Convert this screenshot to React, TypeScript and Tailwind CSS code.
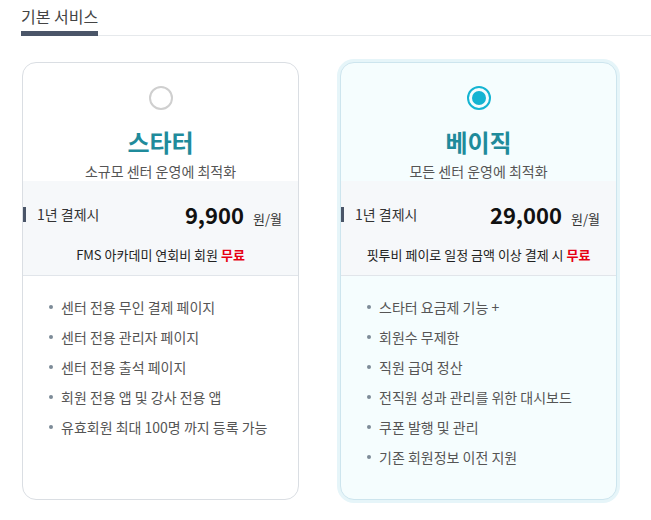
import React from 'react';

type Plan = {
  name: string;
  desc: string;
  price: string;
  note: string;
  features: string[];
  selected: boolean;
};

const plans: Plan[] = [
  {
    name: '스타터',
    desc: '소규모 센터 운영에 최적화',
    price: '9,900',
    note: 'FMS 아카데미 연회비 회원',
    features: [
      '센터 전용 무인 결제 페이지',
      '센터 전용 관리자 페이지',
      '센터 전용 출석 페이지',
      '회원 전용 앱 및 강사 전용 앱',
      '유효회원 최대 100명 까지 등록 가능',
    ],
    selected: false,
  },
  {
    name: '베이직',
    desc: '모든 센터 운영에 최적화',
    price: '29,000',
    note: '핏투비 페이로 일정 금액 이상 결제 시',
    features: [
      '스타터 요금제 기능 +',
      '회원수 무제한',
      '직원 급여 정산',
      '전직원 성과 관리를 위한 대시보드',
      '쿠폰 발행 및 관리',
      '기존 회원정보 이전 지원',
    ],
    selected: true,
  },
];

// Radio indicator at the top of each card
const Radio = ({ on }: { on: boolean }) =>
  on ? (
    <div className="w-[24px] h-[24px] rounded-full border-[2.5px] border-[#14b4d2] flex items-center justify-center">
      <div className="w-[14px] h-[14px] rounded-full bg-[#14b4d2]" />
    </div>
  ) : (
    <div className="w-[24px] h-[24px] rounded-full border-[2.5px] border-[#cfcfcf]" />
  );

const PlanCard = ({ plan }: { plan: Plan }) => (
  <div
    className={
      plan.selected
        ? 'w-[277px] rounded-[14px] border border-[#cde5ee] bg-[#f5fdfe] ring-[3px] ring-[#e6f5f9] overflow-hidden flex flex-col'
        : 'w-[277px] rounded-[14px] border border-[#dadee3] bg-white overflow-hidden flex flex-col'
    }
  >
    <div className="flex flex-col items-center pt-[23px]">
      <Radio on={plan.selected} />
      <div className="mt-[18px] text-[24px] leading-[28px] font-bold text-[#1f8b9b]">{plan.name}</div>
      <div className="mt-[6px] text-[14px] leading-[19px] text-[#555]">{plan.desc}</div>
    </div>

    {/* price band */}
    <div className="bg-[#f6f8fa] border-b border-[#e1e5ea] pt-[17px] pb-[10px]">
      <div className="flex items-center pr-[16px]">
        <div className="-ml-px w-[4px] h-[15px] bg-[#4a5568]" />
        <span className="ml-[11px] text-[14px] text-[#333]">1년 결제시</span>
        <div className="ml-auto flex items-baseline">
          <span className="text-[22px] leading-[32px] font-bold text-[#111]">{plan.price}</span>
          <span className="ml-[9px] text-[13px] text-[#333]">원/월</span>
        </div>
      </div>
      <div className="mt-[15px] text-center text-[13px] leading-[20px] text-[#222]">
        {plan.note} <span className="font-bold text-[#e60012]">무료</span>
      </div>
    </div>

    <ul className="pt-[16px] pl-[26px]">
      {plan.features.map((f) => (
        <li key={f} className="flex items-center h-[30px] text-[14px] text-[#555]">
          <span className="w-[4px] h-[4px] rounded-full bg-[#7d8b98]" />
          <span className="ml-[8px]">{f}</span>
        </li>
      ))}
    </ul>
  </div>
);

export default function App() {
  return (
    <div
      className="w-[651px] h-[520px] bg-white pl-[21px]"
      style={{ fontFamily: '"Noto Sans CJK KR", "Noto Sans", sans-serif' }}
    >
      <div className="border-b border-[#e6e9ec] flex">
        <div className="-mb-px pt-[4px] pb-[3px] border-b-[5px] border-[#4a5568] text-[16px] leading-[24px] text-[#444]">
          기본 서비스
        </div>
      </div>

      <div className="mt-[26px] ml-px flex gap-[41px] h-[438px]">
        {plans.map((p) => (
          <PlanCard key={p.name} plan={p} />
        ))}
      </div>
    </div>
  );
}
